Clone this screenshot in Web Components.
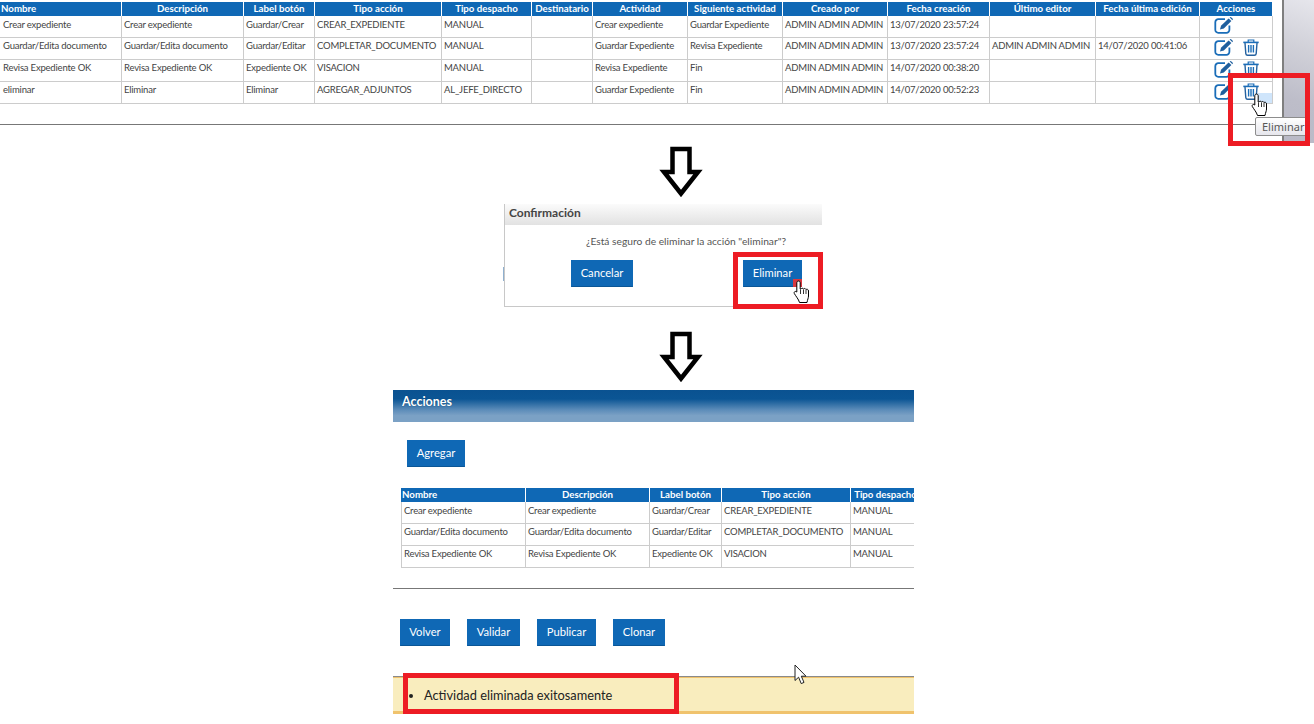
<!DOCTYPE html>
<html lang="es">
<head>
<meta charset="utf-8">
<title>Acciones</title>
<style>
  html, body { margin: 0; padding: 0; background: #fff; }
  body { width: 1314px; height: 724px; overflow: hidden; font-family: Lato, "Liberation Sans", sans-serif; color: #444; }
</style>
</head>
<body>
<top-capture>
  <action-table cols="122px 122px 71px 127px 90px 61px 95px 95px 105px 102px 106px 104px 73px">
    <action-row head><span>Nombre</span><span>Descripción</span><span>Label botón</span><span>Tipo acción</span><span>Tipo despacho</span><span>Destinatario</span><span>Actividad</span><span>Siguiente actividad</span><span>Creado por</span><span>Fecha creación</span><span>Último editor</span><span>Fecha última edición</span><span>Acciones</span></action-row>
    <action-row first><span>Crear expediente</span><span>Crear expediente</span><span>Guardar/Crear</span><span>CREAR_EXPEDIENTE</span><span>MANUAL</span><span></span><span>Crear expediente</span><span>Guardar Expediente</span><span>ADMIN ADMIN ADMIN</span><span>13/07/2020 23:57:24</span><span></span><span></span><row-actions edit></row-actions></action-row>
    <action-row><span>Guardar/Edita documento</span><span>Guardar/Edita documento</span><span>Guardar/Editar</span><span>COMPLETAR_DOCUMENTO</span><span>MANUAL</span><span></span><span>Guardar Expediente</span><span>Revisa Expediente</span><span>ADMIN ADMIN ADMIN</span><span>13/07/2020 23:57:24</span><span>ADMIN ADMIN ADMIN</span><span>14/07/2020 00:41:06</span><row-actions edit trash></row-actions></action-row>
    <action-row><span>Revisa Expediente OK</span><span>Revisa Expediente OK</span><span>Expediente OK</span><span>VISACION</span><span>MANUAL</span><span></span><span>Revisa Expediente</span><span>Fin</span><span>ADMIN ADMIN ADMIN</span><span>14/07/2020 00:38:20</span><span></span><span></span><row-actions edit trash></row-actions></action-row>
    <action-row><span>eliminar</span><span>Eliminar</span><span>Eliminar</span><span>AGREGAR_ADJUNTOS</span><span>AL_JEFE_DIRECTO</span><span></span><span>Guardar Expediente</span><span>Fin</span><span>ADMIN ADMIN ADMIN</span><span>14/07/2020 00:52:23</span><span></span><span></span><row-actions edit trash hover></row-actions></action-row>
  </action-table>
</top-capture>

<flow-arrow style="margin-top:3px"></flow-arrow>

<confirm-dialog heading="Confirmación">¿Está seguro de eliminar la acción "eliminar"?</confirm-dialog>

<flow-arrow style="margin-top:24px"></flow-arrow>

<actions-panel heading="Acciones" message="Actividad eliminada exitosamente">
  <blue-button slot="add" style="--w:58px">Agregar</blue-button>
  <action-table slot="table" cols="125px 124px 72px 129px 70px" bordered>
    <action-row head><span>Nombre</span><span>Descripción</span><span>Label botón</span><span>Tipo acción</span><span>Tipo despacho</span></action-row>
    <action-row first><span>Crear expediente</span><span>Crear expediente</span><span>Guardar/Crear</span><span>CREAR_EXPEDIENTE</span><span>MANUAL</span></action-row>
    <action-row><span>Guardar/Edita documento</span><span>Guardar/Edita documento</span><span>Guardar/Editar</span><span>COMPLETAR_DOCUMENTO</span><span>MANUAL</span></action-row>
    <action-row><span>Revisa Expediente OK</span><span>Revisa Expediente OK</span><span>Expediente OK</span><span>VISACION</span><span>MANUAL</span></action-row>
  </action-table>
  <blue-button slot="foot" style="--w:50px">Volver</blue-button>
  <blue-button slot="foot" style="--w:53px">Validar</blue-button>
  <blue-button slot="foot" style="--w:59px">Publicar</blue-button>
  <blue-button slot="foot" style="--w:52px">Clonar</blue-button>
</actions-panel>

<script>
const FONT = 'Lato, "Liberation Sans", sans-serif';

const HAND = /* html */ `
  <svg width="18" height="24" viewBox="0 0 18 24">
    <path d="M5.5 1C6.5 1 7.2 1.8 7.2 2.8V9H8C8.7 8 10 8 10.5 9C11.2 8.2 12.5 8.4 13 9.5C13.8 8.9 15.5 9.3 15.5 11V16C15.5 18 14.5 19.5 14 22.5H6.5C5.5 19 3 16.5 1.3 13.5C.6 12 2.3 10.6 3.8 12V2.8C3.8 1.8 4.5 1 5.5 1Z" fill="#fff" stroke="#000" stroke-width="1"/>
    <path d="M7.5 9.5V14M10.5 9.5V14M13 10V14" fill="none" stroke="#000" stroke-width=".8"/>
  </svg>`;

class BlueButton extends HTMLElement {
  constructor() {
    super();
    this.attachShadow({ mode: "open" }).innerHTML = /* html */ `
      <style>
        :host {
          display: inline-flex;
          align-items: center;
          justify-content: center;
          box-sizing: border-box;
          width: var(--w, 60px);
          height: 27px;
          padding-bottom: 2px;
          background: #0f68b5;
          border: 1px solid #0f68b5;
          border-bottom-color: #0a5696;
          color: #fff;
          font: 11.2px ${FONT};
        }
      </style>
      <slot></slot>`;
  }
}

class FlowArrow extends HTMLElement {
  constructor() {
    super();
    this.attachShadow({ mode: "open" }).innerHTML = /* html */ `
      <style>
        :host { display: block; width: 44px; height: 52px; margin-left: 659px; }
        svg { display: block; }
      </style>
      <svg width="44" height="52" viewBox="0 0 44 52">
        <path d="M13.5 3H30.5V26H39L22 47.5L5 26H13.5Z" fill="#fff" stroke="#000" stroke-width="4.5" stroke-linejoin="miter"/>
      </svg>`;
  }
}

class RedBox extends HTMLElement {
  constructor() {
    super();
    this.attachShadow({ mode: "open" }).innerHTML = /* html */ `
      <style>
        :host { display: block; position: absolute; box-sizing: border-box; border: 5px solid #ed1c24; z-index: 5; pointer-events: none; }
      </style>`;
  }
}

class HandCursor extends HTMLElement {
  constructor() {
    super();
    this.attachShadow({ mode: "open" }).innerHTML = /* html */ `
      <style>
        :host { display: block; position: absolute; width: 18px; height: 24px; z-index: 6; }
        svg { display: block; }
      </style>
      ${HAND}`;
  }
}

class ArrowCursor extends HTMLElement {
  constructor() {
    super();
    this.attachShadow({ mode: "open" }).innerHTML = /* html */ `
      <style>
        :host { display: block; position: absolute; width: 14px; height: 22px; z-index: 6; }
        svg { display: block; }
      </style>
      <svg width="14" height="22" viewBox="0 0 14 22">
        <path d="M1 1V16.5L4.6 13.2L7.2 19.6L10 18.4L7.3 12.2H12Z" fill="#fff" stroke="#222" stroke-width="1"/>
      </svg>`;
  }
}

class RowActions extends HTMLElement {
  connectedCallback() {
    const edit = /* html */ `
      <svg class="edit" width="20" height="17" viewBox="0 0 20 17">
        <path d="M11 2.2H4.5A3 3 0 0 0 1.3 5.2V12.6A3 3 0 0 0 4.5 15.8H12.4A3 3 0 0 0 15.4 12.6V8.4" fill="none" stroke="#1a6db8" stroke-width="1.8"/>
        <path d="M7 8.8L14.6 1.4L17.4 4L9.8 11.4L6 12.6Z" fill="#1f5f9e"/>
        <path d="M15.6.6L16.8 0L19 2L18.4 3.2Z" fill="#1f5f9e"/>
      </svg>`;
    const trash = /* html */ `
      <svg class="trash" width="16" height="17" viewBox="0 0 16 17">
        <path d="M.3 3.4H15.7" stroke="#1a6db8" stroke-width="1.6" fill="none"/>
        <path d="M5.2 3V1H10.8V3" stroke="#1a6db8" stroke-width="1.2" fill="none"/>
        <path d="M2 4L2.8 14.6Q3 16.2 4.6 16.2H11.4Q13 16.2 13.2 14.6L14 4" stroke="#24619f" stroke-width="1.4" fill="none"/>
        <path d="M5.6 6V13.6M8 6V13.6M10.4 6V13.6" stroke="#1a6db8" stroke-width="1.4" fill="none"/>
      </svg>`;
    this.attachShadow({ mode: "open" }).innerHTML = /* html */ `
      <style>
        :host {
          display: flex;
          align-items: flex-start;
          gap: 9px;
          box-sizing: border-box;
          padding: 1px 0 0 14px;
          border-right: 1px solid #ccc;
        }
        :host([hover]) {
          background: linear-gradient(#cfe5fb, #cfe5fb) no-repeat right bottom / 14px 10px;
        }
        svg { display: block; flex: none; }
      </style>
      ${this.hasAttribute("edit") ? edit : ""}${this.hasAttribute("trash") ? trash : ""}`;
  }
}

class ActionRow extends HTMLElement {
  constructor() {
    super();
    this.attachShadow({ mode: "open" }).innerHTML = /* html */ `
      <style>
        :host {
          display: grid;
          grid-template-columns: var(--cols);
          height: 22px;
          box-sizing: border-box;
          border-bottom: 1px solid #ccc;
          font: 9.5px/13px ${FONT};
          letter-spacing: -.2px;
          color: #444;
        }
        :host([head]) {
          height: 14px;
          border-bottom: 0;
          background: #0f68b5;
          color: #fff;
          font-size: 9.7px;
          font-weight: 700;
          letter-spacing: 0;
        }
        ::slotted(span) {
          box-sizing: border-box;
          padding: 1px 0 0 2px;
          border-right: 1px solid #ccc;
          white-space: nowrap;
          overflow: hidden;
          min-width: 0;
        }
        ::slotted(span:first-child) { padding-left: 3px; }
        :host([first]) ::slotted(span) { padding-top: 2px; }
        :host([head]) ::slotted(span) {
          padding: 0;
          text-align: center;
          border-right-color: #fff;
        }
        :host([head]) ::slotted(span:first-child) { text-align: left; padding-left: 1px; }
      </style>
      <slot></slot>`;
  }
}

class ActionTable extends HTMLElement {
  constructor() {
    super();
    this.attachShadow({ mode: "open" }).innerHTML = /* html */ `
      <style>
        :host { display: block; overflow: hidden; }
        :host([bordered]) { background: linear-gradient(#ccc, #ccc) no-repeat left top / 1px 100%; }
      </style>
      <slot></slot>`;
  }
  connectedCallback() {
    this.style.setProperty("--cols", this.getAttribute("cols"));
  }
}

class TopCapture extends HTMLElement {
  constructor() {
    super();
    this.attachShadow({ mode: "open" }).innerHTML = /* html */ `
      <style>
        :host { display: flex; position: relative; height: 143px; }
        .left { width: 1282px; }
        .table { width: 1273px; padding-top: 2px; }
        hr { margin: 20px 0 0; border: 0; height: 1px; background: #777; }
        .side {
          width: 32px;
          box-sizing: border-box;
          border-left: 2px solid #7f7f7f;
          background: linear-gradient(200deg, #e6e6ec 0%, #d0d0d8 35%, #bdbdc9 70%, #b9b9c6 100%);
        }
        .tip {
          position: absolute;
          left: 1255px;
          top: 117px;
          z-index: 4;
          box-sizing: border-box;
          width: 54px;
          height: 19px;
          padding-left: 6px;
          border: 1px solid #8d8d8d;
          border-radius: 2px;
          background: linear-gradient(#fff, #e6e6ec);
          font: 11px/17px "Noto Sans", sans-serif;
          color: #575757;
        }
        red-box { left: 1228px; top: 73px; width: 82px; height: 73px; }
        hand-cursor { left: 1251px; top: 93px; }
      </style>
      <div class="left">
        <div class="table"><slot></slot></div>
        <hr>
      </div>
      <div class="side"></div>
      <div class="tip">Eliminar</div>
      <hand-cursor></hand-cursor>
      <red-box></red-box>`;
  }
}

class ConfirmDialog extends HTMLElement {
  constructor() {
    super();
    this.attachShadow({ mode: "open" }).innerHTML = /* html */ `
      <style>
        :host {
          display: block;
          position: relative;
          box-sizing: border-box;
          width: 318px;
          height: 103px;
          margin: 6px 0 0 504px;
          border-left: 1px solid #c8c8c8;
          border-bottom: 1px solid #c8c8c8;
        }
        .title {
          height: 21px;
          padding-left: 4px;
          background: linear-gradient(#fbfbfb, #e2e2e2);
          font: 700 12px/18px ${FONT};
          color: #444;
        }
        .text {
          height: 35px;
          box-sizing: border-box;
          padding-left: 81px;
          font: 10.25px/32px ${FONT};
          color: #555;
          white-space: nowrap;
        }
        .actions { display: flex; gap: 110px; padding-left: 66px; }
        .frag { position: absolute; left: -2px; top: 63px; width: 1px; height: 14px; background: #8fb0cf; }
        red-box { left: 228px; top: 48px; width: 90px; height: 57px; }
        .tab { position: absolute; left: 288px; top: 75px; width: 9px; height: 8px; background: #d8383f; z-index: 5; }
        hand-cursor { left: 288px; top: 76px; }
      </style>
      <div class="title"></div>
      <div class="text"><slot></slot></div>
      <div class="actions">
        <blue-button style="--w:62px">Cancelar</blue-button>
        <blue-button style="--w:59px">Eliminar</blue-button>
      </div>
      <div class="frag"></div>
      <div class="tab"></div>
      <hand-cursor></hand-cursor>
      <red-box></red-box>`;
    this.shadowRoot.querySelector(".title").textContent = this.getAttribute("heading");
  }
}

class ActionsPanel extends HTMLElement {
  constructor() {
    super();
    this.attachShadow({ mode: "open" }).innerHTML = /* html */ `
      <style>
        :host {
          display: block;
          position: relative;
          width: 521px;
          margin: 7px 0 0 393px;
        }
        .bar {
          height: 32px;
          box-sizing: border-box;
          padding-left: 9px;
          background: linear-gradient(#0a5291 0%, #0b5594 28%, #5c8cb9 62%, #7ba1c5 80%, #7ba1c5 100%);
          color: #fff;
          font: 700 12.5px/24px ${FONT};
          text-shadow: 0 0 1px #003a6e;
        }
        .add { padding: 18px 0 0 14px; height: 27px; }
        .table { margin: 21px 0 0 8px; }
        hr { margin: 20px 0 0; border: 0; height: 1px; background: #777; }
        .foot { display: flex; gap: 17px; padding: 30px 0 0 7px; }
        .msg {
          box-sizing: border-box;
          height: 38px;
          margin-top: 30px;
          border-top: 1px solid #8a8a8a;
          border-bottom: 3px solid #f0c36d;
          background: #f9edbe;
          box-shadow: inset 0 1px 0 #f0c36d;
          font: 12.8px/37px ${FONT};
          color: #222;
        }
        ul { margin: 0; padding: 0 0 0 31px; }
        red-box { left: 10px; top: 283px; width: 276px; height: 41px; }
        arrow-cursor { left: 401px; top: 274px; }
      </style>
      <div class="bar"></div>
      <div class="add"><slot name="add"></slot></div>
      <div class="table"><slot name="table"></slot></div>
      <hr>
      <div class="foot"><slot name="foot"></slot></div>
      <div class="msg"><ul><li></li></ul></div>
      <arrow-cursor></arrow-cursor>
      <red-box></red-box>`;
    this.shadowRoot.querySelector(".bar").textContent = this.getAttribute("heading");
    this.shadowRoot.querySelector("li").textContent = this.getAttribute("message");
  }
}

customElements.define("blue-button", BlueButton);
customElements.define("flow-arrow", FlowArrow);
customElements.define("red-box", RedBox);
customElements.define("hand-cursor", HandCursor);
customElements.define("arrow-cursor", ArrowCursor);
customElements.define("row-actions", RowActions);
customElements.define("action-row", ActionRow);
customElements.define("action-table", ActionTable);
customElements.define("top-capture", TopCapture);
customElements.define("confirm-dialog", ConfirmDialog);
customElements.define("actions-panel", ActionsPanel);
</script>
</body>
</html>
